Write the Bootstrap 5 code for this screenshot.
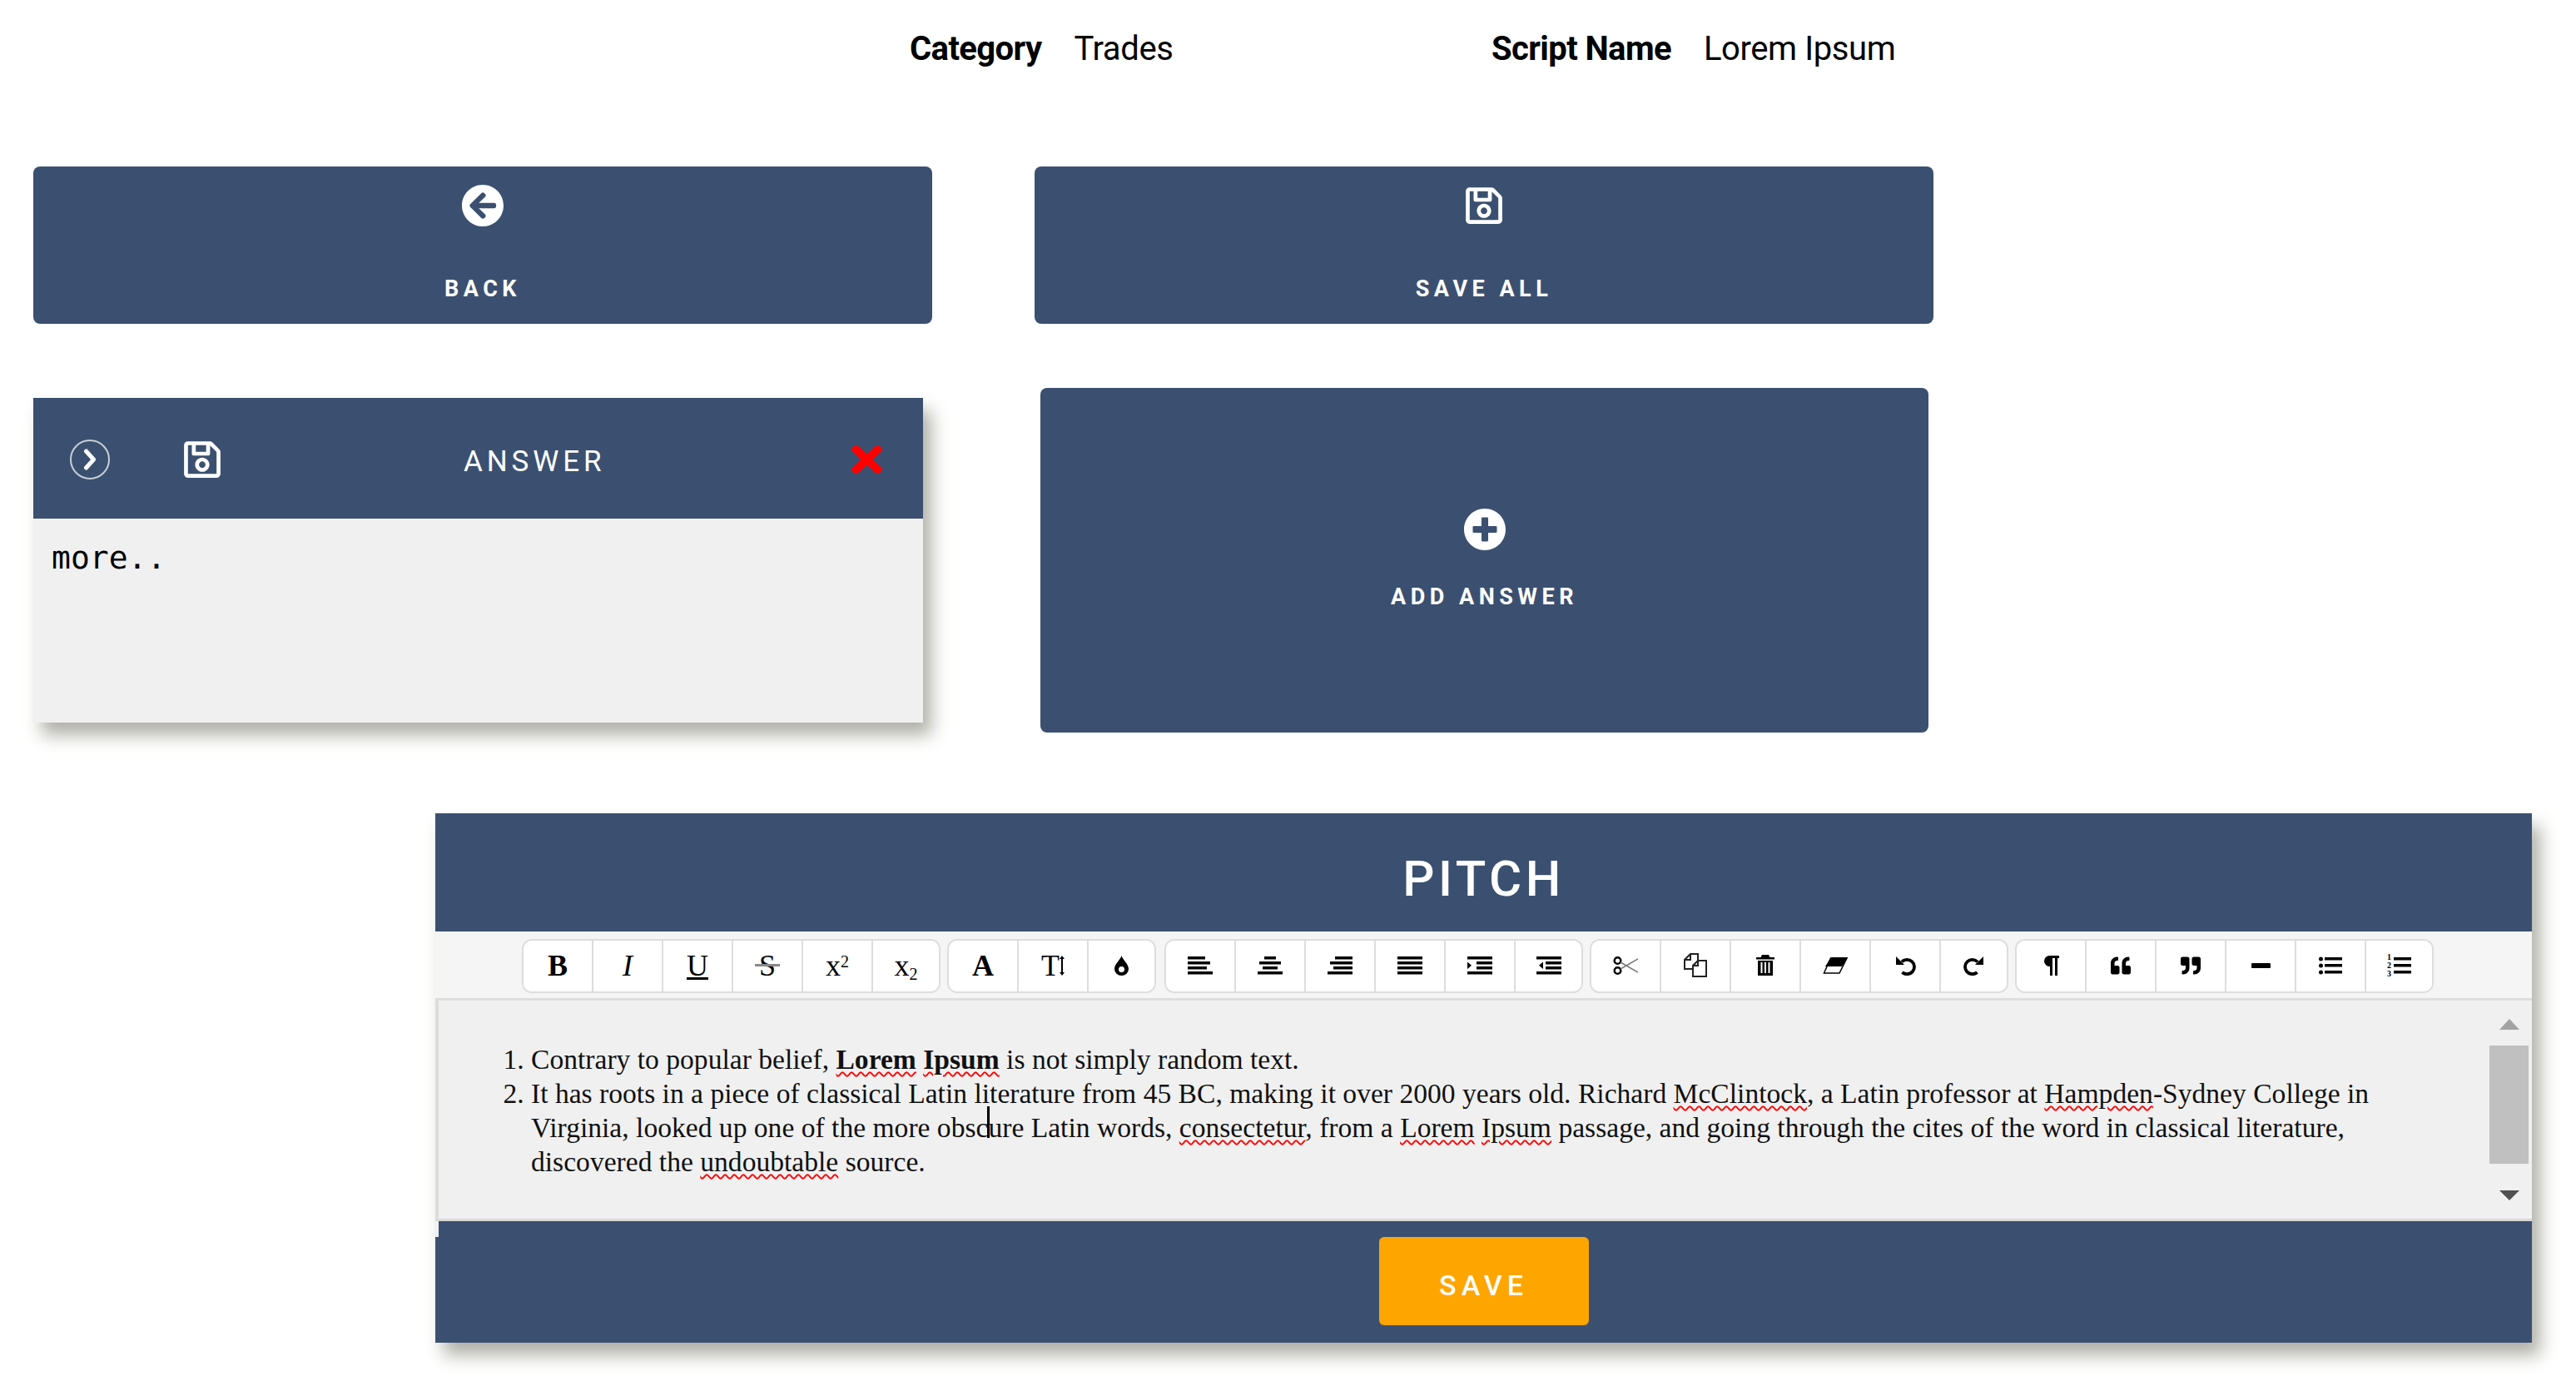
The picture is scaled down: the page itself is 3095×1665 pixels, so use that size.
<!DOCTYPE html>
<html lang="en">
<head>
  <meta charset="UTF-8" />
  <title>Script Editor</title>
  <meta name="viewport" content="width=device-width, initial-scale=1" />
  <link href="https://cdn.jsdelivr.net/npm/bootstrap@5.3.3/dist/css/bootstrap.min.css" rel="stylesheet" />
  <style>
    body { background: #fff; font-family: Roboto, "Liberation Sans", sans-serif; color: #000; min-height: 100vh; }
    .info-row { height: 118px; margin-bottom: 82px; padding-left: 1093px; font-size: 40px; letter-spacing: -0.6px; }
    .info-item { width: 699px; gap: 39px; }
    .info-item b { font-weight: 700; }
    .info-item span { letter-spacing: -0.4px; }
    .navy-card { background: #3b5070; color: #fff; }
    .action-card { border-radius: 8px; padding-top: 22px; }
    .action-label { font-size: 27px; line-height: 30px; font-weight: 700; letter-spacing: 5.5px; }
    .back-card { width: 1080px; height: 189px; margin-left: 40px; }
    .saveall-card { width: 1080px; height: 189px; margin-left: 123px; }
    .action-card .action-label { margin-top: 60px; }
    .big-icon { width: 50px; height: 50px; fill: #fff; }
    .second-row { margin-top: 77px; }
    .answer-box { width: 1069px; margin: 12px 0 0 40px; box-shadow: 10px 15px 20px #b0b0a8; background: #f0f0f0; height: 390px; }
    .answer-head { height: 145px; padding: 0 49px 0 44px; position: relative; }
    .chevron-ring { width: 48px; height: 48px; border: 2px solid #c9ced6; border-radius: 50%; margin-top: 2px; }
    .answer-save { width: 50px; height: 50px; fill: #fff; margin: 3px 0 0 86px; }
    .answer-title { font-size: 35px; font-weight: 400; letter-spacing: 4.9px; margin-left: 289px; margin-top: 10px; }
    .answer-close { width: 37px; height: 50px; fill: #f00; margin-left: auto; margin-top: 3px; }
    .answer-body { padding: 23px 22px; font-family: "DejaVu Sans Mono", monospace; font-size: 38px; line-height: 48px; }
    .add-card { width: 1067px; height: 414px; margin-left: 141px; border-radius: 8px; padding-top: 145px; }
    .add-card .action-label { margin-top: 41px; }
    .pitch-panel { width: 2519px; margin: 97px 0 0 523px; box-shadow: 10px 15px 20px #b0b0a8; }
    .pitch-title { height: 142px; padding-top: 16px; font-size: 60px; font-weight: 500; letter-spacing: 4.5px; }
    .tool-strip { background: #f5f5f5; height: 83px; padding: 9px 0 0 104px; border-bottom: 3px solid #ddd; gap: 8px; }
    .tool-group { border: 2px solid #ddd; border-radius: 12px; height: 65px; background: #fff; overflow: hidden; }
    .tool-group:nth-child(3) { margin-left: 2px; }
    .tool-btn { width: 84px; height: 61px; padding: 0; border: 0; border-right: 2px solid #ddd; border-radius: 0; background: #fff; color: #000; font-family: "Liberation Serif", serif; font-size: 36px; line-height: 61px; }
    .tool-btn:last-child { border-right: 0; width: 79px; }
    .tool-btn svg { fill: #000; vertical-align: middle; margin-top: -8px; }
    .tool-btn sup, .tool-btn sub { font-size: 20px; }
    .strike-s { position: relative; display: inline-block; line-height: 36px; }
    .strike-s::after { content: ""; position: absolute; left: -5px; right: -5px; top: 16px; height: 3px; background: #888; }
    .editor-body { height: 265px; background: #f0f0f0; border-left: 4px solid #ddd; border-bottom: 3px solid #d8d8d8; }
    .editor-text { flex: 1; padding: 50px 60px 0 111px; font-family: "Liberation Serif", serif; font-size: 33.6px; line-height: 41px; color: #111; }
    .editor-text ol { margin: 0; padding: 0; }
    .spell-miss { text-decoration: underline wavy #f00 2px; text-underline-offset: 3px; }
    .text-caret { position: relative; }
    .text-caret::after { content: ""; position: absolute; left: -1px; top: -7px; width: 3px; height: 38px; background: #000; }
    .fake-scroll { width: 47px; margin-right: 4px; padding-top: 22px; }
    .arrow-up { border: 12px solid transparent; border-top: 0; border-bottom: 13px solid #a3a3a3; }
    .arrow-down { border: 12px solid transparent; border-bottom: 0; border-top: 12px solid #505050; margin-top: 32px; }
    .scroll-thumb { width: 47px; height: 142px; background: #c0c0c0; margin-top: 19px; }
    .pitch-foot { height: 146px; padding-top: 19px; position: relative; }
    .pitch-foot::before { content: ""; position: absolute; left: 0; top: 0; width: 4px; height: 19px; background: #f0f0f0; }
    .save-btn { width: 252px; height: 106px; background: #ffa500; border: 0; border-radius: 6px; color: #fff; font-size: 34px; font-weight: 500; letter-spacing: 6px; padding: 10px 0 0; }
  </style>
</head>
<body>
  <svg width="0" height="0" class="position-absolute">
    <symbol id="ic-save" viewBox="0 0 448 512"><path d="M433.941 129.941l-83.882-83.882A48 48 0 0 0 316.118 32H48C21.49 32 0 53.49 0 80v352c0 26.51 21.49 48 48 48h352c26.51 0 48-21.49 48-48V163.882a48 48 0 0 0-14.059-33.941zM272 80v80H144V80h128zm122 352H54a6 6 0 0 1-6-6V86a6 6 0 0 1 6-6h42v104c0 13.255 10.745 24 24 24h176c13.255 0 24-10.745 24-24V83.882l78.243 78.243a6 6 0 0 1 1.757 4.243V426a6 6 0 0 1-6 6zM224 232c-48.523 0-88 39.477-88 88s39.477 88 88 88 88-39.477 88-88-39.477-88-88-88zm0 128c-22.056 0-40-17.944-40-40s17.944-40 40-40 40 17.944 40 40-17.944 40-40 40z"/></symbol>
    <symbol id="ic-quote" viewBox="0 0 512 512"><path d="M464 256h-80v-64c0-35.3 28.7-64 64-64h8c13.3 0 24-10.7 24-24V56c0-13.3-10.7-24-24-24h-8c-88.4 0-160 71.6-160 160v240c0 26.5 21.5 48 48 48h128c26.5 0 48-21.5 48-48V304c0-26.5-21.5-48-48-48zm-288 0H96v-64c0-35.3 28.7-64 64-64h8c13.3 0 24-10.7 24-24V56c0-13.3-10.7-24-24-24h-8C71.6 32 0 103.6 0 192v240c0 26.5 21.5 48 48 48h128c26.5 0 48-21.5 48-48V304c0-26.5-21.5-48-48-48z"/></symbol>
  </svg>

  <!-- Script info -->
  <div class="info-row d-flex align-items-center">
    <div class="info-item d-flex"><b>Category</b><span>Trades</span></div>
    <div class="info-item d-flex"><b>Script Name</b><span>Lorem Ipsum</span></div>
  </div>

  <!-- Back / save all -->
  <div class="d-flex">
    <div class="navy-card action-card back-card d-flex flex-column align-items-center">
      <svg class="big-icon" viewBox="8 8 496 496"><path d="M256 504C119 504 8 393 8 256S119 8 256 8s248 111 248 248-111 248-248 248zm28.9-143.6L209.4 288H392c13.3 0 24-10.7 24-24v-16c0-13.3-10.7-24-24-24H209.4l75.5-72.4c9.7-9.3 9.9-24.8.4-34.3l-11-10.9c-9.4-9.4-24.6-9.4-33.9 0L107.7 239c-9.4 9.4-9.4 24.6 0 33.9l132.7 132.7c9.4 9.4 24.6 9.4 33.9 0l11-10.9c9.5-9.5 9.3-25-.4-34.3z"/></svg>
      <div class="action-label">BACK</div>
    </div>
    <div class="navy-card action-card saveall-card d-flex flex-column align-items-center">
      <svg class="big-icon"><use href="#ic-save"/></svg>
      <div class="action-label">SAVE ALL</div>
    </div>
  </div>

  <!-- Answer + add answer -->
  <div class="second-row d-flex align-items-start">
    <div class="answer-box">
      <div class="navy-card answer-head d-flex align-items-center">
        <div class="chevron-ring d-flex align-items-center justify-content-center">
          <svg width="16" height="26" viewBox="0 0 16 26" fill="none" stroke="#fff" stroke-width="5" stroke-linecap="round" stroke-linejoin="round"><path d="M3.500 3l9 10-9 10"/></svg>
        </div>
        <svg class="answer-save"><use href="#ic-save"/></svg>
        <div class="answer-title">ANSWER</div>
        <svg class="answer-close" viewBox="0 0 352 512" preserveAspectRatio="none"><path d="M242.72 256l100.07-100.07c12.28-12.28 12.28-32.19 0-44.48l-22.24-22.24c-12.28-12.28-32.19-12.28-44.48 0L176 189.28 75.93 89.21c-12.28-12.28-32.19-12.28-44.48 0L9.21 111.45c-12.28 12.28-12.28 32.19 0 44.48L109.28 256 9.21 356.07c-12.28 12.28-12.28 32.19 0 44.48l22.24 22.24c12.28 12.28 32.2 12.28 44.48 0L176 322.72l100.07 100.07c12.28 12.28 32.2 12.28 44.48 0l22.24-22.24c12.28-12.28 12.28-32.19 0-44.48L242.72 256z"/></svg>
      </div>
      <div class="answer-body">more..</div>
    </div>
    <div class="navy-card add-card d-flex flex-column align-items-center">
      <svg class="big-icon" viewBox="8 8 496 496"><path d="M256 8C119 8 8 119 8 256s111 248 248 248 248-111 248-248S393 8 256 8zm144 276c0 6.6-5.4 12-12 12h-92v92c0 6.6-5.4 12-12 12h-56c-6.6 0-12-5.4-12-12v-92h-92c-6.6 0-12-5.4-12-12v-56c0-6.6 5.4-12 12-12h92v-92c0-6.6 5.4-12 12-12h56c6.6 0 12 5.4 12 12v92h92c6.6 0 12 5.4 12 12v56z"/></svg>
      <div class="action-label">ADD ANSWER</div>
    </div>
  </div>

  <!-- Pitch editor -->
  <div class="pitch-panel">
    <div class="navy-card pitch-title d-flex align-items-center justify-content-center">PITCH</div>
    <div class="tool-strip d-flex">
      <div class="tool-group d-flex">
        <button class="btn tool-btn fw-bold">B</button>
        <button class="btn tool-btn fst-italic">I</button>
        <button class="btn tool-btn text-decoration-underline">U</button>
        <button class="btn tool-btn"><span class="strike-s">S</span></button>
        <button class="btn tool-btn">x<sup>2</sup></button>
        <button class="btn tool-btn">x<sub>2</sub></button>
      </div>
      <div class="tool-group d-flex">
        <button class="btn tool-btn fw-bold">A</button>
        <button class="btn tool-btn">T<svg width="6" height="24" viewBox="0 0 6 24"><path d="M3 0l3 4H4v16h2l-3 4-3-4h2V4H0z"/></svg></button>
        <button class="btn tool-btn"><svg width="17" height="24" viewBox="0 0 17 24"><path d="M8.500 0C10 5 17 10 17 16a8.500 8 0 0 1-17 0C0 10 7 5 8.500 0zM8.500 13a3.500 3.500 0 1 0 0 7 3.500 3.500 0 0 0 0-7z" fill-rule="evenodd"/></svg></button>
      </div>
      <div class="tool-group d-flex">
        <button class="btn tool-btn"><svg width="30" height="22" viewBox="0 0 30 22"><path d="M0 0h21v3.500H0zM0 6h27v3.500H0zM0 12h23v3.500H0zM0 18h30v3.500H0z"/></svg></button>
        <button class="btn tool-btn"><svg width="30" height="22" viewBox="0 0 30 22"><path d="M8 0h14v3.500H8zM2 6h26v3.500H2zM6 12h18v3.500H6zM0 18h30v3.500H0z"/></svg></button>
        <button class="btn tool-btn"><svg width="30" height="22" viewBox="0 0 30 22"><path d="M9 0h21v3.500H9zM3 6h27v3.500H3zM7 12h23v3.500H7zM0 18h30v3.500H0z"/></svg></button>
        <button class="btn tool-btn"><svg width="30" height="22" viewBox="0 0 30 22"><path d="M0 0h30v3.500H0zM0 6h30v3.500H0zM0 12h30v3.500H0zM0 18h30v3.500H0z"/></svg></button>
        <button class="btn tool-btn"><svg width="30" height="22" viewBox="0 0 30 22"><path d="M0 0h30v3.500H0zM11 6h19v3.500H11zM11 12h19v3.500H11zM0 18h30v3.500H0zM0 6.500l5 4.300-5 4.200z"/></svg></button>
        <button class="btn tool-btn"><svg width="30" height="22" viewBox="0 0 30 22"><path d="M0 0h30v3.500H0zM11 6h19v3.500H11zM11 12h19v3.500H11zM0 18h30v3.500H0zM8 6.500l-5 4.300 5 4.200z"/></svg></button>
      </div>
      <div class="tool-group d-flex">
        <button class="btn tool-btn"><svg width="30" height="24" viewBox="0 0 30 24"><g fill="none" stroke-width="2.500"><circle cx="5.500" cy="6" r="3.800" stroke="#000"/><circle cx="5.500" cy="18" r="3.800" stroke="#000"/><path d="M9 8l21 12M9 16L30 4" stroke="#777" stroke-width="1.500"/></g></svg></button>
        <button class="btn tool-btn"><svg width="28" height="29" viewBox="0 0 28 29"><g fill="#fff" stroke="#222" stroke-width="2"><path d="M8 1h9v18H1V8z"/><path d="M8 1v7H1" fill="none"/><path d="M17 9h10v19H11V15z"/><path d="M17 9v6h-6" fill="none"/></g></svg></button>
        <button class="btn tool-btn"><svg width="22" height="25" viewBox="0 0 22 25"><path d="M7 0h8l1.500 3H22v2.500H0V3h5.500zM2 7h18v18H2zM5.500 9v13h2V9zM10 9v13h2V9zM14.500 9v13h2V9z" fill-rule="evenodd"/></svg></button>
        <button class="btn tool-btn"><svg width="30" height="20" viewBox="0 0 30 20"><path d="M9.500 1H29L20 19H1.500z" fill="#fff" stroke="#000" stroke-width="1.500"/><path d="M10 0h20l-7 11H3z"/></svg></button>
        <button class="btn tool-btn"><svg width="25" height="24" viewBox="0 0 25 24"><path d="M8 7.500A8.700 8.700 0 1 1 8.500 20" fill="none" stroke="#000" stroke-width="3.800"/><path d="M1 1v10h10z"/></svg></button>
        <button class="btn tool-btn"><svg width="25" height="24" viewBox="0 0 25 24"><path d="M17 7.500A8.700 8.700 0 1 0 16.500 20" fill="none" stroke="#000" stroke-width="3.800"/><path d="M24 1v10H14z"/></svg></button>
      </div>
      <div class="tool-group d-flex">
        <button class="btn tool-btn"><svg width="20" height="24" viewBox="0 0 20 24"><path d="M8 0h12v3h-2v21h-3V3h-3v21H9V13a6.500 6.500 0 0 1-1-13z"/></svg></button>
        <button class="btn tool-btn"><svg width="28" height="24"><use href="#ic-quote"/></svg></button>
        <button class="btn tool-btn"><svg width="28" height="24" style="transform: scale(-1, -1)"><use href="#ic-quote"/></svg></button>
        <button class="btn tool-btn"><svg width="23" height="6" viewBox="0 0 23 6"><rect width="23" height="6" rx="1"/></svg></button>
        <button class="btn tool-btn"><svg width="28" height="22" viewBox="0 0 28 22"><circle cx="2.500" cy="3" r="2.500"/><circle cx="2.500" cy="11" r="2.500"/><circle cx="2.500" cy="19" r="2.500"/><path d="M7 1h21v3.500H7zM7 9h21v3.500H7zM7 17h21v3.500H7z"/></svg></button>
        <button class="btn tool-btn"><svg width="29" height="29" viewBox="0 0 29 29"><path d="M8 5h21v3.500H8zM8 13h21v3.500H8zM8 21h21v3.500H8z"/><g font-family="Liberation Serif" font-size="10" font-weight="700"><text x="0" y="8">1</text><text x="0" y="18">2</text><text x="0" y="28">3</text></g></svg></button>
      </div>
    </div>
    <div class="editor-body d-flex">
      <div class="editor-text">
        <ol>
          <li>Contrary to popular belief, <b class="spell-miss">Lorem</b> <b class="spell-miss">Ipsum</b> is not simply random text.</li>
          <li>It has roots in a piece of classical Latin literature from 45 BC, making it over 2000 years old. Richard <span class="spell-miss">McClintock</span>, a Latin professor at <span class="spell-miss">Hampden</span>-Sydney College in Virginia, looked up one of the more obsc<span class="text-caret"></span>ure Latin words, <span class="spell-miss">consectetur</span>, from a <span class="spell-miss">Lorem</span> <span class="spell-miss">Ipsum</span> passage, and going through the cites of the word in classical literature, discovered the <span class="spell-miss">undoubtable</span> source.</li>
        </ol>
      </div>
      <div class="fake-scroll d-flex flex-column align-items-center">
        <div class="arrow-up"></div>
        <div class="scroll-thumb"></div>
        <div class="arrow-down"></div>
      </div>
    </div>
    <div class="navy-card pitch-foot d-flex justify-content-center align-items-start">
      <button class="btn save-btn">SAVE</button>
    </div>
  </div>
  <script src="https://cdn.jsdelivr.net/npm/bootstrap@5.3.3/dist/js/bootstrap.bundle.min.js"></script>
</body>
</html>
